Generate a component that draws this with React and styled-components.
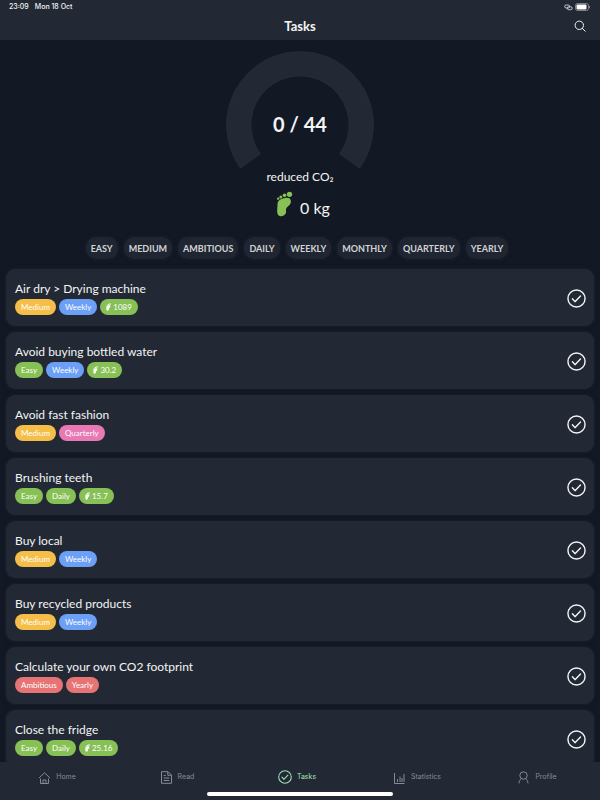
import React, { useState } from 'react'
import styled, { createGlobalStyle } from 'styled-components'

const GlobalStyle = createGlobalStyle`
  * {
    box-sizing: border-box;
  }
  body {
    margin: 0;
    background: #121824;
    color: #f4f4f4;
    font-family: Lato, "Open Sans", sans-serif;
  }
  button {
    border: 0;
    padding: 0;
    background: none;
    color: inherit;
    font-family: inherit;
    cursor: pointer;
  }
`

const colors = {
  green: '#87c055',
  yellow: '#f4be48',
  blue: '#6ca0f6',
  pink: '#e879b4',
  red: '#e77474',
}

const tagColors = {
  Easy: colors.green,
  Medium: colors.yellow,
  Ambitious: colors.red,
  Daily: colors.green,
  Weekly: colors.blue,
  Quarterly: colors.pink,
  Yearly: colors.red,
}

const filters = ['EASY', 'MEDIUM', 'AMBITIOUS', 'DAILY', 'WEEKLY', 'MONTHLY', 'QUARTERLY', 'YEARLY']

const tasks = [
  { title: 'Air dry > Drying machine', tags: ['Medium', 'Weekly'], co2: '1089' },
  { title: 'Avoid buying bottled water', tags: ['Easy', 'Weekly'], co2: '30.2' },
  { title: 'Avoid fast fashion', tags: ['Medium', 'Quarterly'] },
  { title: 'Brushing teeth', tags: ['Easy', 'Daily'], co2: '15.7' },
  { title: 'Buy local', tags: ['Medium', 'Weekly'] },
  { title: 'Buy recycled products', tags: ['Medium', 'Weekly'] },
  { title: 'Calculate your own CO2 footprint', tags: ['Ambitious', 'Yearly'] },
  { title: 'Close the fridge', tags: ['Easy', 'Daily'], co2: '25.16' },
]

const Screen = styled.div`
  display: flex;
  flex-direction: column;
  height: 100vh;
`

const Header = styled.header`
  flex: none;
  background: #222934;
`

const StatusBar = styled.div`
  display: flex;
  align-items: center;
  gap: 6px;
  height: 14px;
  padding: 0 9px;
  font: 500 7px/14px Inter, sans-serif;
`

const StatusIcons = styled.span`
  display: flex;
  align-items: center;
  gap: 2px;
  margin-left: auto;
`

const TitleBar = styled.div`
  display: grid;
  grid-template-columns: 1fr auto 1fr;
  align-items: center;
  height: 26px;
  padding: 0 14px 2px;
`

const Title = styled.h1`
  grid-column: 2;
  margin: 0;
  font-size: 13px;
  line-height: 24px;
  font-weight: 700;
`

const SearchButton = styled.button`
  display: flex;
  justify-self: end;
`

const Main = styled.main`
  flex: 1;
  min-height: 0;
  overflow-y: auto;
  scrollbar-width: none;
`

const Summary = styled.section`
  display: flex;
  flex-direction: column;
  align-items: center;
  padding-top: 10px;
`

const Gauge = styled.div`
  display: grid;
  place-items: center;
  > * {
    grid-area: 1 / 1;
  }
`

const Score = styled.strong`
  padding-top: 28px;
  font-size: 20px;
  line-height: 24px;
`

const Caption = styled.p`
  margin: 0;
  font-size: 12px;
  line-height: 14px;
`

const Reduced = styled.p`
  display: flex;
  align-items: flex-end;
  gap: 7px;
  height: 26px;
  margin: 7px 0 0;
  padding-left: 6px;
  font-size: 16px;
  line-height: 18px;
`

const Filters = styled.div`
  display: flex;
  flex-wrap: wrap;
  justify-content: center;
  gap: 6px;
  padding: 20px 12px 10px 6px;
`

const Filter = styled.button`
  height: 22px;
  padding: 0 5px;
  border-radius: 10px;
  background: ${(p) => (p.$active ? '#3a4454' : '#1f2631')};
  box-shadow: 0 0 4px #1b222d;
  color: #d2d3d5;
  font-size: 9px;
  font-weight: 700;
`

const List = styled.ul`
  display: flex;
  flex-direction: column;
  gap: 6px;
  margin: 0;
  padding: 0 6px 6px;
  list-style: none;
`

const Card = styled.li`
  display: flex;
  align-items: center;
  justify-content: space-between;
  padding: 12px 8px 11px 9px;
  border-radius: 9px;
  background: #222934;
  box-shadow: 0 0 4px #1b222d;
`

const CardTitle = styled.h2`
  margin: 0 0 2px;
  font-size: 12px;
  line-height: 16px;
  font-weight: 400;
`

const Tags = styled.div`
  display: flex;
  gap: 3px;
`

const Tag = styled.span`
  display: flex;
  align-items: center;
  gap: 2px;
  height: 16px;
  padding: 0 6px;
  border-radius: 8px;
  background: ${(p) => p.$color};
  color: #ffffff;
  font-size: 8px;
`

const CheckButton = styled.button`
  display: flex;
  color: ${(p) => (p.$done ? '#87c055' : '#f4f4f4')};
`

const Footer = styled.footer`
  flex: none;
  display: flex;
  flex-direction: column;
  align-items: center;
  padding-bottom: 4px;
  background: #222934;
`

const Nav = styled.nav`
  display: grid;
  grid-template-columns: repeat(5, 1fr);
  width: 100%;
  height: 30px;
`

const NavLink = styled.a`
  display: flex;
  align-items: center;
  justify-content: center;
  gap: 5px;
  padding-right: 6px;
  color: ${(p) => (p.$active ? '#a0e3b8' : '#878c94')};
  font: 400 7px/12px Inter, sans-serif;
  text-decoration: none;
`

const HomeIndicator = styled.div`
  width: 31%;
  height: 4px;
  border-radius: 2px;
  background: #ffffff;
`

const Foot = ({ size, color }) => (
  <svg width={Math.round(size * 0.64)} height={size} viewBox="0 0 50 78" fill={color} aria-hidden="true">
    <circle cx="6" cy="23" r="3.5" />
    <circle cx="14" cy="18" r="4.5" />
    <circle cx="25" cy="13" r="5.5" />
    <circle cx="40" cy="10" r="8" />
    <path d="M4 40C4 28 14 23 27 21c12-2 18 3 17 12-1 10-9 12-13 18-4 7 2 12-4 19-5 7-16 8-21 2-5-7-2-20-2-32z" />
  </svg>
)

const CheckCircle = ({ size, width }) => (
  <svg width={size} height={size} viewBox="0 0 20 20" fill="none" stroke="currentColor" strokeWidth={width} aria-hidden="true">
    <circle cx="10" cy="10" r="9" />
    <path d="M5.7 10.2l2.7 3.1 5.8-6" strokeLinecap="round" strokeLinejoin="round" />
  </svg>
)

const icons = {
  Home: (
    <>
      <path d="M1 7L6.5 1.8 12 7M2.5 7.5V12.5h8V7.5" />
      <path d="M5 12V9h3v3" />
    </>
  ),
  Read: (
    <>
      <path d="M1.5.7h6.5l3.5 3.5v8.1h-10zM7.8.7v3.6h3.7" />
      <path d="M3.7 4.5h2M3.7 7h5.6M3.7 9.5h5.6" />
    </>
  ),
  Statistics: <path d="M1.5 2v10.5h10M4.5 11V8M7 11V5.5M9 11V7M11 11V3" />,
  Profile: (
    <>
      <circle cx="6.5" cy="4.5" r="3.7" />
      <path d="M4.5 7.7C3 8.5 2.2 10 2 12.3M8.5 7.7c1.5.8 2.3 2.3 2.5 4.6" />
    </>
  ),
}

const NavIcon = ({ name }) => {
  if (name === 'Tasks') return <CheckCircle size={14} width={1.5} />
  return (
    <svg width="13" height="13" viewBox="0 0 13 13" fill="none" stroke="currentColor" aria-hidden="true">
      {icons[name]}
    </svg>
  )
}

const Task = ({ title, tags, co2 }) => {
  const [done, setDone] = useState(false)
  return (
    <Card>
      <div>
        <CardTitle>{title}</CardTitle>
        <Tags>
          {tags.map((tag) => (
            <Tag key={tag} $color={tagColors[tag]}>{tag}</Tag>
          ))}
          {co2 && (
            <Tag $color={colors.green}>
              <Foot size={8} color="#ffffff" />
              {co2}
            </Tag>
          )}
        </Tags>
      </div>
      <CheckButton $done={done} aria-label={`Complete ${title}`} onClick={() => setDone(!done)}>
        <CheckCircle size={19} width={1.5} />
      </CheckButton>
    </Card>
  )
}

const App = () => {
  const [filter, setFilter] = useState(null)
  return (
    <Screen>
      <GlobalStyle />
      <Header>
        <StatusBar>
          <span>23:09</span>
          <span>Mon 18 Oct</span>
          <StatusIcons>
            <svg width="9" height="7" viewBox="0 0 9 7" fill="none" stroke="#c4c7cb" aria-hidden="true">
              <rect x="0.7" y="1" width="5" height="3" rx="1.5" />
              <rect x="3.2" y="2.7" width="5" height="3" rx="1.5" />
            </svg>
            <svg width="16" height="8" viewBox="0 0 16 8" aria-hidden="true">
              <rect x="0.5" y="0.5" width="13" height="7" rx="2" fill="none" stroke="#7d828a" />
              <rect x="1.5" y="1.5" width="10" height="5" rx="1" fill="#fff" />
              <path d="M14.5 2.8v2.4" stroke="#7d828a" />
            </svg>
          </StatusIcons>
        </StatusBar>
        <TitleBar>
          <Title>Tasks</Title>
          <SearchButton aria-label="Search">
            <svg width="12" height="12" viewBox="0 0 12 12" fill="none" stroke="#f4f4f4" aria-hidden="true">
              <circle cx="5.3" cy="5.3" r="4.2" />
              <path d="M8.4 8.4l2.8 2.8" strokeLinecap="round" />
            </svg>
          </SearchButton>
        </TitleBar>
      </Header>
      <Main>
        <Summary>
          <Gauge>
            <svg width="150" height="120" viewBox="0 0 150 120" aria-hidden="true">
              <path
                d="M15.5 118.2A73.5 73.5 0 1 1 134.5 118.2L114.6 103.8A49 49 0 1 0 35.4 103.8z"
                fill="#222934"
                stroke="#30353c"
                strokeWidth="0.5"
              />
            </svg>
            <Score>0 / 44</Score>
          </Gauge>
          <Caption>reduced CO₂</Caption>
          <Reduced>
            <Foot size={26} color={colors.green} />
            0 kg
          </Reduced>
        </Summary>
        <Filters>
          {filters.map((name) => (
            <Filter
              key={name}
              $active={filter === name}
              aria-pressed={filter === name}
              onClick={() => setFilter(filter === name ? null : name)}
            >
              {name}
            </Filter>
          ))}
        </Filters>
        <List>
          {tasks.map((task) => (
            <Task key={task.title} {...task} />
          ))}
        </List>
      </Main>
      <Footer>
        <Nav>
          {['Home', 'Read', 'Tasks', 'Statistics', 'Profile'].map((name) => (
            <NavLink key={name} href={`#${name.toLowerCase()}`} $active={name === 'Tasks'}>
              <NavIcon name={name} />
              {name}
            </NavLink>
          ))}
        </Nav>
        <HomeIndicator />
      </Footer>
    </Screen>
  )
}

export default App
